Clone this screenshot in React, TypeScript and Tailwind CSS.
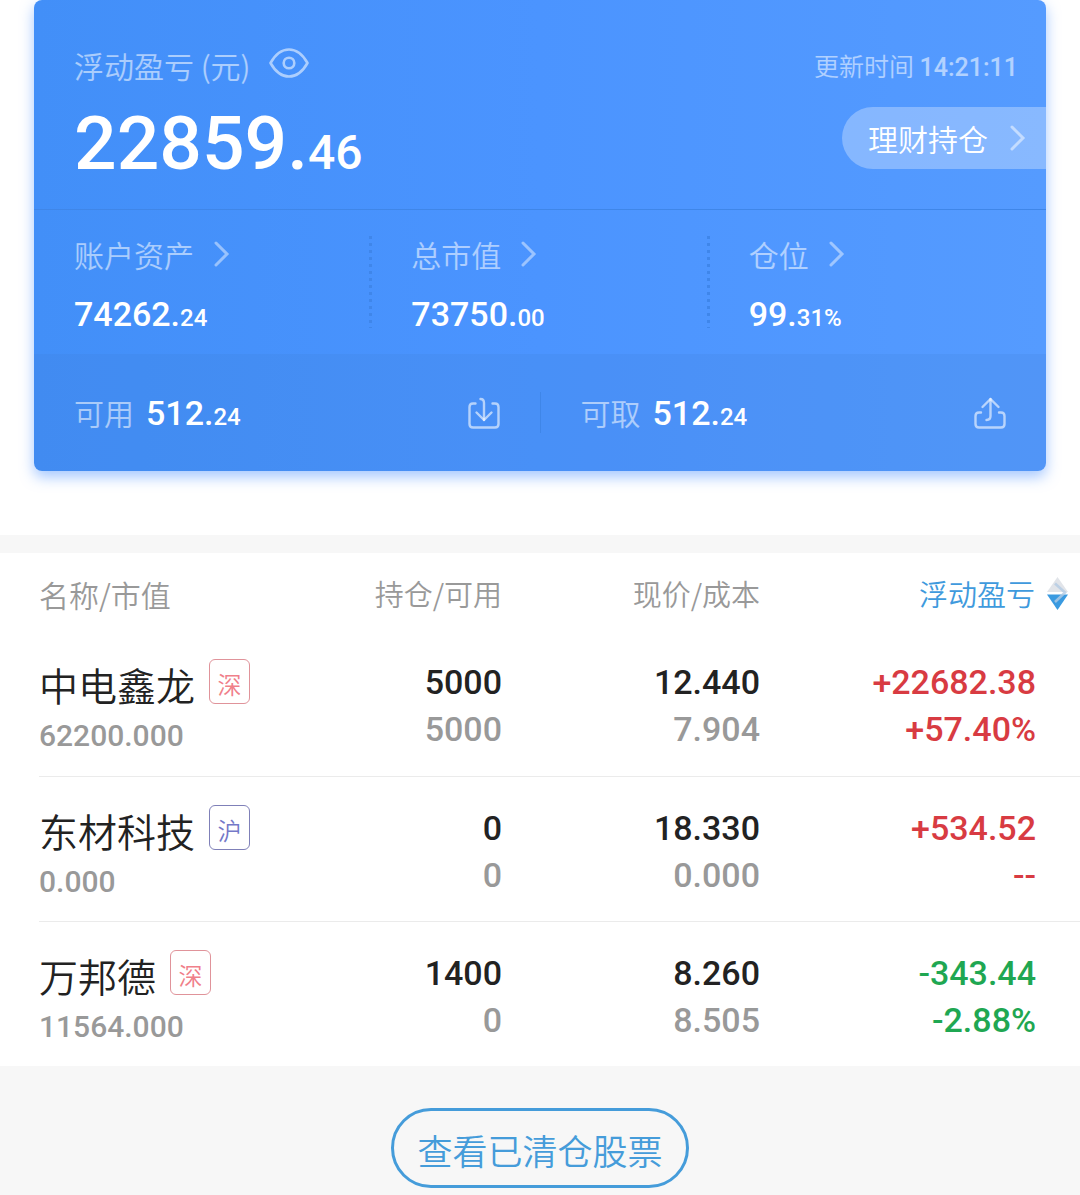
import { useState } from "react"

const holdings = [
  {
    name: "中电鑫龙",
    market: "深",
    value: "62200.000",
    position: "5000",
    available: "5000",
    price: "12.440",
    cost: "7.904",
    profit: "+22682.38",
    percent: "+57.40%",
    up: true,
  },
  {
    name: "东材科技",
    market: "沪",
    value: "0.000",
    position: "0",
    available: "0",
    price: "18.330",
    cost: "0.000",
    profit: "+534.52",
    percent: "--",
    up: true,
  },
  {
    name: "万邦德",
    market: "深",
    value: "11564.000",
    position: "1400",
    available: "0",
    price: "8.260",
    cost: "8.505",
    profit: "-343.44",
    percent: "-2.88%",
    up: false,
  },
]

const summary = [
  { label: "账户资产", whole: "74262.", decimals: "24" },
  { label: "总市值", whole: "73750.", decimals: "00" },
  { label: "仓位", whole: "99.", decimals: "31%" },
]

function Chevron({ className = "" }: { className?: string }) {
  return (
    <svg viewBox="0 0 16 26" fill="none" className={`w-4 h-[26px] ${className}`} aria-hidden="true">
      <path d="M2 2 L13 13 L2 24" stroke="currentColor" strokeWidth="3" strokeLinecap="round" />
    </svg>
  )
}

function EyeIcon() {
  return (
    <svg viewBox="0 0 40 30" fill="none" stroke="currentColor" strokeWidth="2.6" className="w-10 h-[30px]" aria-hidden="true">
      <path d="M1.5 15 C6 7 12 1.5 20 1.5 C28 1.5 34 7 38.5 15 C34 23 28 28.5 20 28.5 C12 28.5 6 23 1.5 15 Z" strokeLinejoin="round" />
      <circle cx="20" cy="15" r="5.3" />
    </svg>
  )
}

function DepositIcon() {
  return (
    <svg viewBox="0 0 32 32" fill="none" stroke="currentColor" strokeWidth="2.4" strokeLinecap="round" strokeLinejoin="round" className="size-8" aria-hidden="true">
      <path d="M7.5 6.5 H5 Q1.5 6.5 1.5 10 V27 Q1.5 30.5 5 30.5 H27 Q30.5 30.5 30.5 27 V10 Q30.5 6.5 27 6.5 H24.5" />
      <path d="M12.5 2 Q16 2 16 6 V23" />
      <path d="M8.5 15.5 L16 23 L23.5 15.5" />
    </svg>
  )
}

function WithdrawIcon() {
  return (
    <svg viewBox="0 0 32 32" fill="none" stroke="currentColor" strokeWidth="2.4" strokeLinecap="round" strokeLinejoin="round" className="size-8" aria-hidden="true">
      <path d="M7 15.5 H5 Q1.5 15.5 1.5 19 V27 Q1.5 30.5 5 30.5 H27 Q30.5 30.5 30.5 27 V19 Q30.5 15.5 27 15.5 H25" />
      <path d="M12.5 23 Q16.5 23 16.5 19 V2" />
      <path d="M8.5 10 L16.5 2 L24.5 10" />
    </svg>
  )
}

function SortIcon() {
  return (
    <svg viewBox="0 0 21 34" className="w-[21px] h-[34px]" aria-hidden="true">
      <path d="M10.5 0 L21 15 H0 Z" fill="#e1e4e9" />
      <path d="M0 17.5 H21 L10.5 33 Z" fill="#3a9ae0" />
      <path d="M8 6.5 L18 15.5 L8 25" fill="none" stroke="#b3cae4" strokeWidth="2.6" strokeOpacity="0.8" />
    </svg>
  )
}

function Money({ whole, decimals }: { whole: string; decimals: string }) {
  return (
    <span className="font-[Roboto,sans-serif] text-[34px] leading-10 font-medium text-white">
      {whole}
      <span className="text-2xl">{decimals}</span>
    </span>
  )
}

export default function App() {
  const [hidden, setHidden] = useState(false)

  return (
    <div className="min-h-screen bg-[#f7f7f7] font-['Noto_Sans_CJK_SC',sans-serif] font-[350] text-[#222]">
      <main>
        <div className="bg-white px-[34px] pb-16">
          {/* Account card */}
          <section className="rounded-lg overflow-hidden bg-linear-to-r from-[#428ff8] via-[#4b94ff] via-50% to-[#559bff] shadow-[0_6px_14px_rgba(75,145,255,0.5)]">
            <div className="flex justify-between h-[210px] pt-11 border-b border-[#3f86e8]">
              <div className="pl-10">
                <div className="flex items-center gap-[18px] text-white/55">
                  <h1 className="text-3xl leading-[42px] font-[350]">浮动盈亏 (元)</h1>
                  <button onClick={() => setHidden(!hidden)} aria-label="显示或隐藏金额" className="pb-1">
                    <EyeIcon />
                  </button>
                </div>
                <p className="font-[Roboto,sans-serif] text-[75px] leading-[115px] font-medium text-white">
                  {hidden ? "****" : "22859."}
                  {!hidden && <span className="text-5xl">46</span>}
                </p>
              </div>
              <div className="flex flex-col items-end">
                <p className="pr-7 text-[25px] leading-[42px] text-white/55">
                  更新时间 <span className="font-[Roboto,sans-serif] font-medium">14:21:11</span>
                </p>
                <a href="#wealth" className="mt-[18px] h-[62px] flex items-center gap-[22px] pl-[26px] pr-5 rounded-l-full bg-white/30 text-3xl text-white">
                  理财持仓
                  <Chevron className="text-white/50" />
                </a>
              </div>
            </div>

            <div className="grid grid-cols-3 h-36 py-[26px]">
              {summary.map((item, i) => (
                <a key={item.label} href="#detail" className="relative block pl-10">
                  {i > 0 && (
                    <span className="absolute top-0 -left-[2px] w-[3px] h-[92px] bg-[repeating-linear-gradient(#3f86ea_0_3px,transparent_3px_7px)]" />
                  )}
                  <span className="flex items-center gap-5 text-3xl leading-9 text-white/55">
                    {item.label}
                    <Chevron className="text-white/45" />
                  </span>
                  <span className="block pt-[22px]">
                    <Money whole={item.whole} decimals={item.decimals} />
                  </span>
                </a>
              ))}
            </div>

            <div className="flex items-center h-[117px] bg-[#3c78c8]/15">
              <div className="flex-1 flex items-center px-10 border-r border-[#3f86e8]">
                <p className="flex items-baseline gap-3">
                  <span className="text-3xl leading-10 text-white/55">可用</span>
                  <Money whole="512." decimals="24" />
                </p>
                <button aria-label="转入" className="ml-auto text-white/60">
                  <DepositIcon />
                </button>
              </div>
              <div className="flex-1 flex items-center px-10">
                <p className="flex items-baseline gap-3">
                  <span className="text-3xl leading-10 text-white/55">可取</span>
                  <Money whole="512." decimals="24" />
                </p>
                <button aria-label="转出" className="ml-auto text-white/60">
                  <WithdrawIcon />
                </button>
              </div>
            </div>
          </section>
        </div>

        {/* Holdings */}
        <div className="mt-[18px] bg-white pl-[39px]">
          <table className="w-full table-fixed border-collapse">
            <colgroup>
              <col />
              <col className="w-[200px]" />
              <col className="w-[258px]" />
              <col className="w-[320px]" />
            </colgroup>
            <thead>
              <tr className="h-[78px] text-[29px] text-[#999]">
                <th className="pt-1 text-left text-3xl font-[350]">名称/市值</th>
                <th className="pt-1 text-right font-[350]">持仓/可用</th>
                <th className="pt-1 text-right font-[350]">现价/成本</th>
                <th className="pt-1 pr-3 font-[350]">
                  <button className="ml-auto flex items-center gap-3 text-[#3f9add]">
                    浮动盈亏
                    <SortIcon />
                  </button>
                </th>
              </tr>
            </thead>
            <tbody>
              {holdings.map((row) => (
                <tr key={row.name} className="h-[145px] align-top border-b border-[#ebebeb] last:border-b-0 text-right font-[Roboto,sans-serif] text-[34px] leading-[47px] font-medium">
                  <td className="pt-7 text-left">
                    <div className="flex items-start gap-[14px] font-['Noto_Sans_CJK_SC',sans-serif] font-[350]">
                      <span className="text-[39px] leading-[50px]">{row.name}</span>
                      <span
                        className={`w-[41px] h-[45px] rounded-md border text-center text-2xl leading-[47px] ${
                          row.market === "深" ? "border-[#e0939a] text-[#f0808a]" : "border-[#7f80b8] text-[#7478c8]"
                        }`}
                      >
                        {row.market}
                      </span>
                    </div>
                    <div className="text-3xl leading-[54px] text-[#999]">{row.value}</div>
                  </td>
                  <td className="pt-7">
                    <div>{row.position}</div>
                    <div className="text-[#999]">{row.available}</div>
                  </td>
                  <td className="pt-7">
                    <div>{row.price}</div>
                    <div className="text-[#999]">{row.cost}</div>
                  </td>
                  <td className={`pt-7 pr-11 ${row.up ? "text-[#d83b42]" : "text-[#1fa752]"}`}>
                    <div>{row.profit}</div>
                    <div>{row.percent}</div>
                  </td>
                </tr>
              ))}
            </tbody>
          </table>
        </div>

        <div className="flex justify-center pt-[42px] pb-2">
          <button className="h-20 px-[23px] pt-1 rounded-full border-3 border-[#459cda] text-[35px] text-[#459cda]">
            查看已清仓股票
          </button>
        </div>
      </main>
    </div>
  )
}
